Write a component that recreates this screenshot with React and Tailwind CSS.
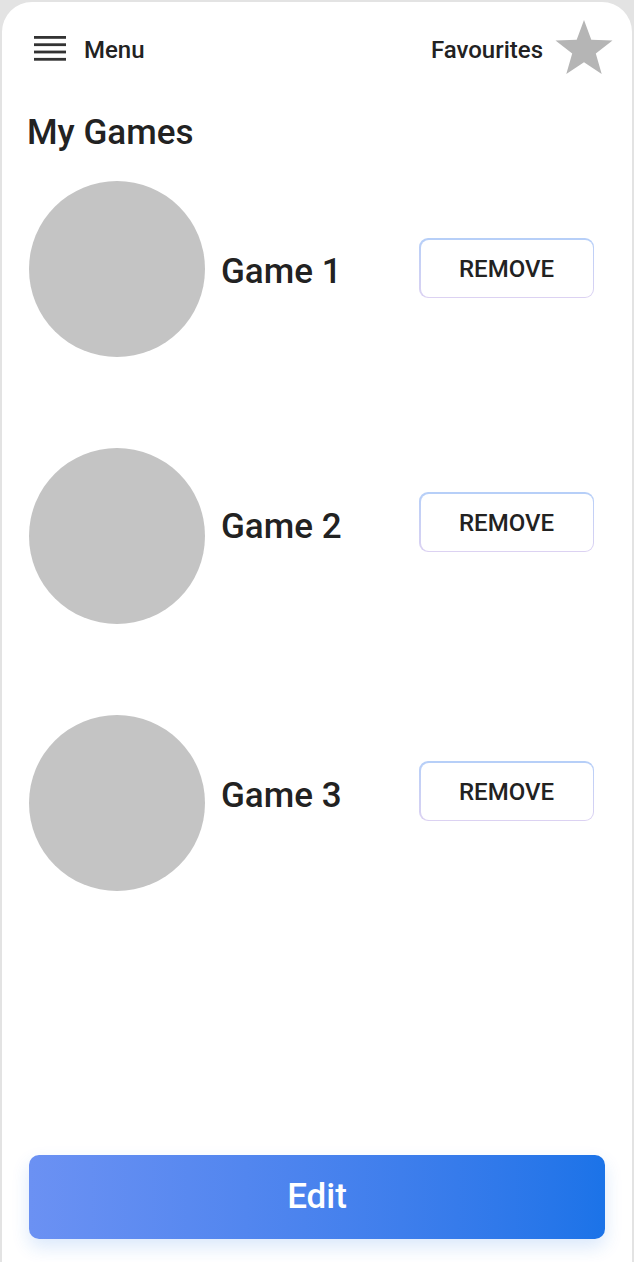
import React from "react";

const games = [
  { name: "Game 1", textTop: "mt-[72px]", btnTop: "mt-[57px]" },
  { name: "Game 2", textTop: "mt-[60px]", btnTop: "mt-[44px]" },
  { name: "Game 3", textTop: "mt-[62px]", btnTop: "mt-[46px]" },
];

function MenuIcon() {
  return (
    <svg width="32" height="25" viewBox="0 0 32 25" aria-hidden="true">
      <rect x="0" y="0" width="32" height="2.8" fill="#333" />
      <rect x="0" y="7.3" width="32" height="2.8" fill="#333" />
      <rect x="0" y="14.6" width="32" height="2.8" fill="#333" />
      <rect x="0" y="21.9" width="32" height="2.8" fill="#333" />
    </svg>
  );
}

function StarIcon() {
  // five point star, grey fill
  return (
    <svg width="58" height="56" viewBox="0 0 58 56" aria-hidden="true">
      <polygon
        points="29,0 36.3,19.7 57.5,20.5 40.8,33.5 46.7,54 29,42.2 11.3,54 17.2,33.5 0.5,20.5 21.7,19.7"
        fill="#b5b5b5"
      />
    </svg>
  );
}

export default function App() {
  return (
    <div className="h-[1262px] overflow-hidden bg-[#e3e3e3] pt-[2px] px-[2px] font-['Roboto',sans-serif] text-[#222]">
      <div className="h-[1292px] rounded-[30px] bg-white flex flex-col">
        {/* Header */}
        <header className="flex items-center justify-between h-[56px] mt-[18px] pl-[32px] pr-[19px]">
          <div className="flex items-center gap-[18px]">
            <MenuIcon />
            <span className="pt-[3px] text-[24px] font-medium leading-none">Menu</span>
          </div>
          <div className="flex items-center gap-[12px]">
            <span className="pt-[3px] text-[24px] font-medium leading-none">Favourites</span>
            <StarIcon />
          </div>
        </header>

        <h1 className="mt-[38px] pl-[25px] text-[35px] font-medium leading-[38px]">My Games</h1>

        {/* Games list */}
        <div className="mt-[29px] flex flex-col gap-[91px] pl-[27px] pr-[38px]">
          {games.map((g) => (
            <div key={g.name} className="flex items-start">
              <div className="w-[176px] h-[176px] rounded-full bg-[#c4c4c4] shrink-0" />
              <span className={`${g.textTop} ml-[16px] flex-1 text-[35px] font-medium leading-[38px]`}>
                {g.name}
              </span>
              <div
                className={`${g.btnTop} w-[175px] h-[60px] rounded-[9px] p-[1.5px] bg-gradient-to-b from-[#b6cff8] to-[#dcd2f2]`}
              >
                <button className="w-full h-full rounded-[8px] bg-white pt-[1px] text-[24px] font-medium text-[#222]">
                  REMOVE
                </button>
              </div>
            </div>
          ))}
        </div>

        <div className="mt-[264px] px-[27px]">
          <button className="w-full h-[84px] rounded-[10px] bg-gradient-to-r from-[#6b91f3] to-[#1b73e8] text-white text-[35px] font-medium shadow-[0_8px_18px_rgba(26,115,232,0.16)]">
            Edit
          </button>
        </div>
      </div>
    </div>
  );
}
